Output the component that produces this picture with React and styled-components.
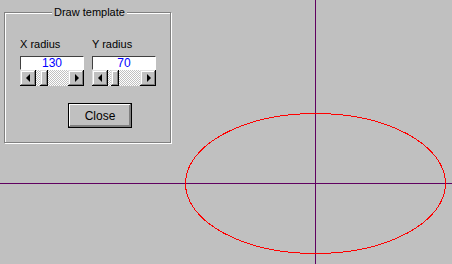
import React from 'react';
import styled, { createGlobalStyle } from 'styled-components';

const GlobalStyle = createGlobalStyle`
  html, body {
    margin: 0;
    padding: 0;
    background: #c0c0c0;
  }
  body {
    font-family: "Liberation Sans", Arial, sans-serif;
    font-size: 11px;
    color: #000;
  }
`;

const Desktop = styled.div`
  position: relative;
  width: 452px;
  height: 264px;
  overflow: hidden;
  background: #c0c0c0;
`;

const Canvas = styled.svg`
  position: absolute;
  inset: 0;
  display: block;
`;

const Dialog = styled.div`
  position: absolute;
  left: 4px;
  top: 12px;
  width: 167px;
  height: 131px;
  box-sizing: border-box;
  border: 1px solid #808080;
  box-shadow: inset 1px 1px #fff, 1px 1px #fff;
  padding: 25px 0 0 15px;
`;

const Title = styled.div`
  position: absolute;
  top: -7px;
  left: 47px;
  padding: 0 2px;
  line-height: 13px;
  background: #c0c0c0;
  white-space: nowrap;
`;

const Fields = styled.div`
  display: flex;
  gap: 8px;
`;

const Field = styled.div`
  display: flex;
  flex-direction: column;
  width: 64px;
`;

const Label = styled.div`
  line-height: 13px;
  height: 13px;
  margin-bottom: 5px;
`;

const Edit = styled.div`
  box-sizing: border-box;
  height: 14px;
  background: #fff;
  border-top: 1px solid #404040;
  border-left: 1px solid #404040;
  border-right: 1px solid #fff;
  border-bottom: 1px solid #fff;
  color: #0000ff;
  text-align: center;
  line-height: 12px;
  font-size: 12px;
`;

const Scroll = styled.div`
  display: flex;
  height: 16px;
`;

const raised = `
  background: #c0c0c0;
  box-shadow: inset -1px -1px #000, inset 1px 1px #dfdfdf,
    inset -2px -2px #808080, inset 2px 2px #fff;
`;

const ArrowButton = styled.div`
  ${raised}
  width: 16px;
  height: 16px;
  display: flex;
  align-items: center;
  justify-content: center;

  &::after {
    content: '';
    width: 0;
    height: 0;
    border-top: 4px solid transparent;
    border-bottom: 4px solid transparent;
    ${({ $dir }) =>
      $dir === 'left'
        ? 'border-right: 4px solid #000; margin-left: -1px;'
        : 'border-left: 4px solid #000; margin-left: 1px;'}
  }
`;

const Track = styled.div`
  flex: 1;
  display: flex;
  background: repeating-conic-gradient(#fff 0 25%, #c0c0c0 0 50%) 0 0 / 2px 2px;
`;

const Thumb = styled.div`
  ${raised}
  width: 8px;
  height: 16px;
  margin-left: ${({ $offset }) => $offset}px;
`;

const ButtonRow = styled.div`
  display: flex;
  margin-top: 17px;
  padding-left: 48px;
`;

const Button = styled.button`
  width: 64px;
  height: 25px;
  box-sizing: border-box;
  border: 1px solid #000;
  padding: 0;
  background: #c0c0c0;
  font-family: "Liberation Sans", Arial, sans-serif;
  font-size: 12px;
  color: #000;
  box-shadow: inset -1px -1px #808080, inset 1px 1px #fff, inset -2px -2px #808080;
`;

function RadiusField({ label, value, thumb }) {
  return (
    <Field>
      <Label>{label}</Label>
      <Edit>{value}</Edit>
      <Scroll>
        <ArrowButton $dir="left" />
        <Track>
          <Thumb $offset={thumb} />
        </Track>
        <ArrowButton $dir="right" />
      </Scroll>
    </Field>
  );
}

export default function App() {
  const cx = 315.5;
  const cy = 183.5;
  const rx = 130;
  const ry = 70;

  return (
    <Desktop>
      <GlobalStyle />
      <Canvas width="452" height="264" viewBox="0 0 452 264">
        <line x1={cx} y1="0" x2={cx} y2="264" stroke="#600060" strokeWidth="1" shapeRendering="crispEdges" />
        <line x1="0" y1={cy} x2="452" y2={cy} stroke="#600060" strokeWidth="1" shapeRendering="crispEdges" />
        <ellipse cx={cx} cy={cy} rx={rx} ry={ry} fill="none" stroke="#ff0000" strokeWidth="1" shapeRendering="crispEdges" />
      </Canvas>

      <Dialog>
        <Title>Draw template</Title>
        <Fields>
          <RadiusField label="X radius" value="130" thumb={4} />
          <RadiusField label="Y radius" value="70" thumb={3} />
        </Fields>
        <ButtonRow>
          <Button>Close</Button>
        </ButtonRow>
      </Dialog>
    </Desktop>
  );
}
